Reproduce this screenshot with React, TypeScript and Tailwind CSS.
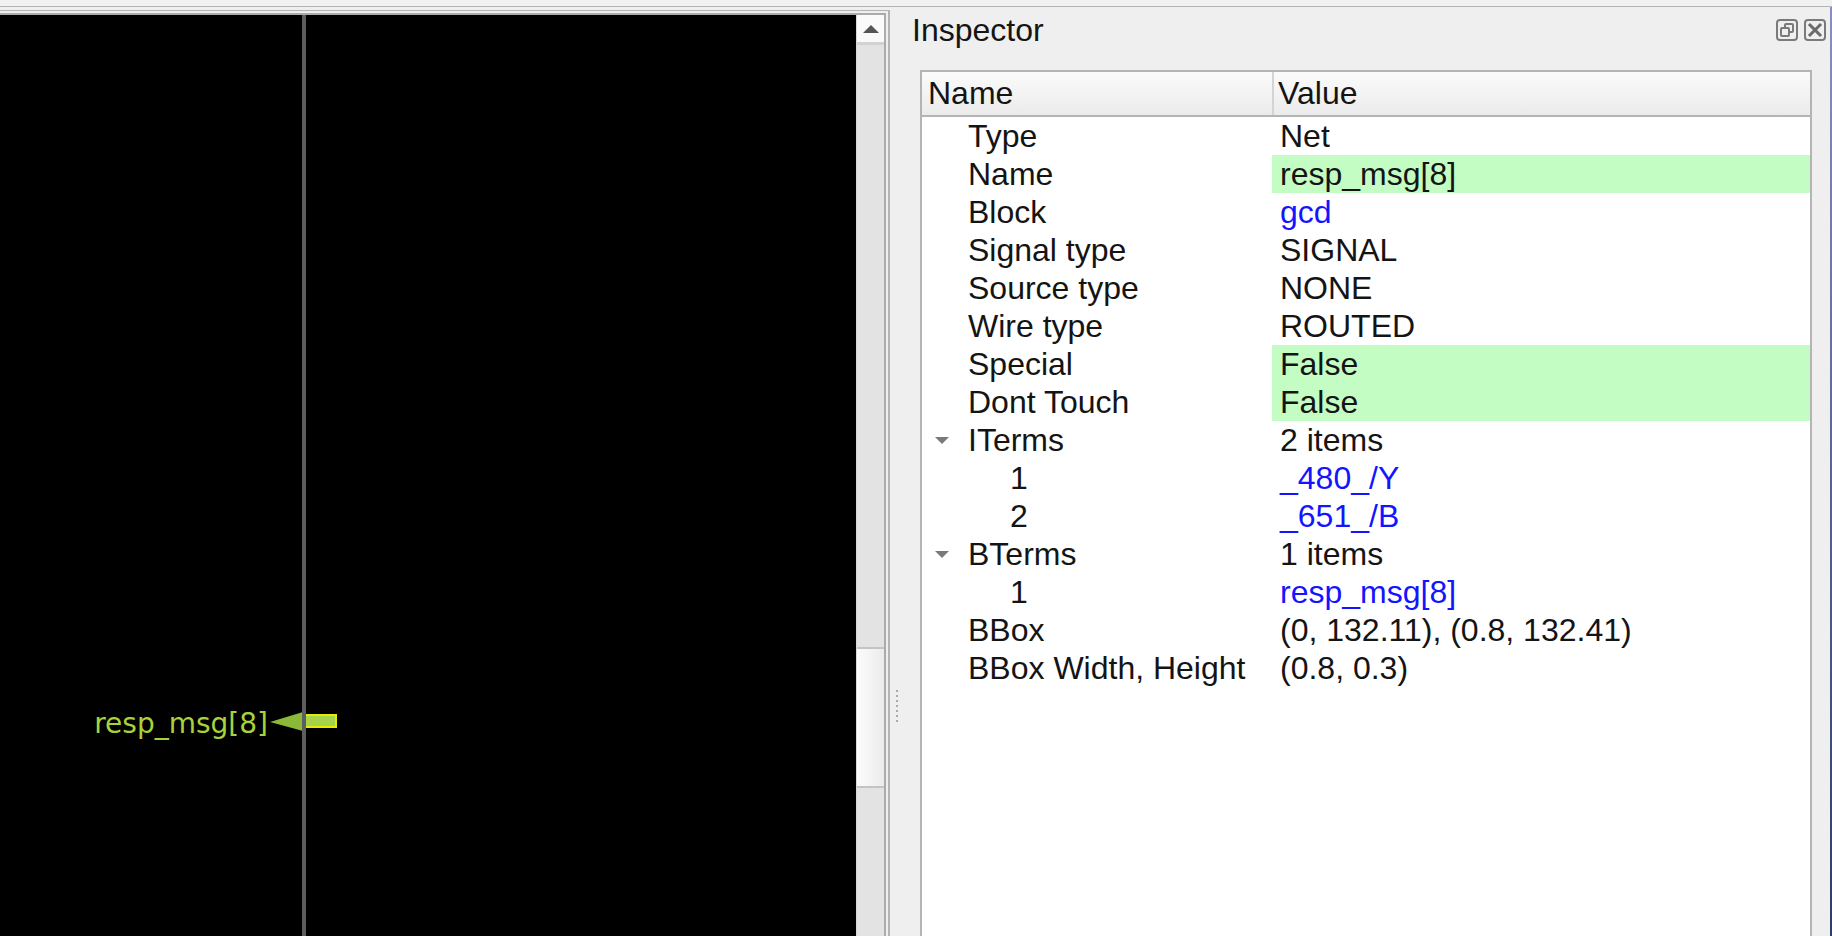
import React from "react";

type Row = {
  name: string;
  value: string;
  level: number;
  green?: boolean;
  blue?: boolean;
  expander?: boolean;
};

const rows: Row[] = [
  { name: "Type", value: "Net", level: 0 },
  { name: "Name", value: "resp_msg[8]", level: 0, green: true },
  { name: "Block", value: "gcd", level: 0, blue: true },
  { name: "Signal type", value: "SIGNAL", level: 0 },
  { name: "Source type", value: "NONE", level: 0 },
  { name: "Wire type", value: "ROUTED", level: 0 },
  { name: "Special", value: "False", level: 0, green: true },
  { name: "Dont Touch", value: "False", level: 0, green: true },
  { name: "ITerms", value: "2 items", level: 0, expander: true },
  { name: "1", value: "_480_/Y", level: 1, blue: true },
  { name: "2", value: "_651_/B", level: 1, blue: true },
  { name: "BTerms", value: "1 items", level: 0, expander: true },
  { name: "1", value: "resp_msg[8]", level: 1, blue: true },
  { name: "BBox", value: "(0, 132.11), (0.8, 132.41)", level: 0 },
  { name: "BBox Width, Height", value: "(0.8, 0.3)", level: 0 },
];

function FloatIcon() {
  return (
    <svg width="22" height="22" viewBox="0 0 22 22">
      <rect x="1" y="1" width="20" height="20" rx="3" fill="none" stroke="#7a7a7a" strokeWidth="2" />
      <rect x="9" y="5" width="8" height="8" rx="1" fill="none" stroke="#7a7a7a" strokeWidth="2" />
      <rect x="5" y="9" width="8" height="8" rx="1" fill="#efefef" stroke="#7a7a7a" strokeWidth="2" />
    </svg>
  );
}

function CloseIcon() {
  return (
    <svg width="22" height="22" viewBox="0 0 22 22">
      <rect x="1" y="1" width="20" height="20" rx="3" fill="none" stroke="#7a7a7a" strokeWidth="2" />
      <path d="M6 6 L16 16 M16 6 L6 16" stroke="#6a6a6a" strokeWidth="3" strokeLinecap="square" />
    </svg>
  );
}

function DownArrow() {
  return (
    <svg width="14" height="8" viewBox="0 0 14 8">
      <path d="M0 0 L14 0 L7 7 Z" fill="#7a7a7a" />
    </svg>
  );
}

export default function App() {
  return (
    <div className="w-[1832px] h-[936px] overflow-hidden bg-[#efefef] flex flex-col font-['Liberation_Sans',Arial,sans-serif] text-[#141414]">
      <div className="h-[6px] shrink-0 bg-[#f1f1f1]" />
      <div className="h-px shrink-0 bg-[#b4b4b4]" />
      <div className="flex flex-1 min-h-0">
        {/* Left layout view */}
        <div className="w-[890px] shrink-0 pt-[3px] flex flex-col">
          <div className="flex-1 flex flex-col border-t border-r-2 border-[#b4b4b4] pt-[2px] pr-[2px]">
            <div className="flex-1 flex border-t-2 border-r-2 border-[#ababab]">
              <div className="flex-1 bg-black relative overflow-hidden">
                <div className="absolute right-[588px] top-[695px] text-[28px] leading-[28px] whitespace-nowrap text-[#a8d23c] font-['DejaVu_Sans',sans-serif]">
                  resp_msg[8]
                </div>
                <svg className="absolute left-[268px] top-[693px]" width="72" height="28" viewBox="0 0 72 28">
                  <path d="M2 14 L35 4 L35 23 Z" fill="#8cb83a" />
                  <rect x="36" y="7" width="32" height="12" fill="#a7d34a" stroke="#e8ea00" strokeWidth="2" />
                </svg>
                <div className="absolute left-[302px] top-0 bottom-0 w-[4px] bg-[#5e5e5e]" />
              </div>
              <div className="w-[28px] shrink-0 flex flex-col bg-[#e3e3e3] border-l border-[#d8d8d8]">
                <div className="h-[27px] bg-[#fafafa] flex items-center justify-center">
                  <svg width="16" height="8" viewBox="0 0 16 8">
                    <path d="M8 0 L16 8 L0 8 Z" fill="#555555" />
                  </svg>
                </div>
                <div className="h-[3px] bg-[#d2d2d2]" />
                <div className="mt-[602px] h-[141px] bg-linear-to-r from-[#fbfbfb] to-[#ececec] border-y-2 border-[#c4c4c4]" />
              </div>
            </div>
          </div>
        </div>

        {/* Splitter */}
        <div className="w-[14px] shrink-0 pt-[683px] pl-[6px] flex flex-col gap-[3px]">
          {[0, 1, 2, 3, 4, 5, 6].map((i) => (
            <div key={i} className="w-[2px] h-[2px] bg-[#aaaaaa]" />
          ))}
        </div>

        {/* Inspector dock */}
        <div className="flex-1 flex flex-col min-w-0">
          <div className="h-[46px] shrink-0 flex items-center pl-[8px] pr-[4px]">
            <span className="text-[32px] leading-[46px]">Inspector</span>
            <div className="ml-auto flex gap-[6px]">
              <FloatIcon />
              <CloseIcon />
            </div>
          </div>
          <div className="ml-[16px] mr-[18px] mt-[17px] flex-1 flex flex-col border-2 border-b-0 border-[#b4b4b4] bg-white text-[32px]">
            <div className="h-[45px] shrink-0 flex border-b-2 border-[#b4b4b4] bg-linear-to-b from-[#fbfbfb] to-[#ebebeb]">
              <div className="w-[350px] shrink-0 pl-[6px] leading-[43px]">Name</div>
              <div className="w-[2px] bg-[#d4d4d4]" />
              <div className="flex-1 pl-[4px] leading-[43px]">Value</div>
            </div>
            {rows.map((r, i) => (
              <div key={i} className="h-[38px] shrink-0 flex leading-[38px]">
                <div className={"w-[350px] shrink-0 relative whitespace-nowrap " + (r.level === 0 ? "pl-[46px]" : "pl-[88px]")}>
                  {r.expander && (
                    <div className="absolute left-[13px] top-[16px] flex">
                      <DownArrow />
                    </div>
                  )}
                  {r.name}
                </div>
                <div
                  className={
                    "flex-1 pl-[8px] whitespace-nowrap " +
                    (r.green ? "bg-[#c3fdc3] " : "") +
                    (r.blue ? "text-[#1414ff]" : "")
                  }
                >
                  {r.value}
                </div>
              </div>
            ))}
          </div>
        </div>

        {/* Window edge */}
        <div className="w-[2px] shrink-0 bg-linear-to-b from-[#8c8cc4] to-[#2c3c6c]" />
      </div>
    </div>
  );
}
